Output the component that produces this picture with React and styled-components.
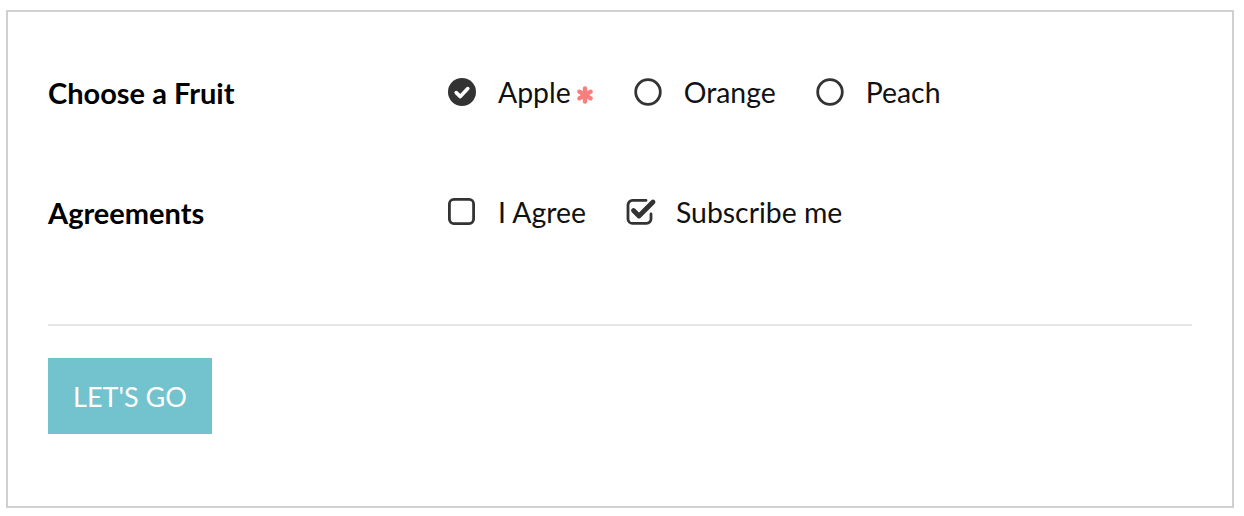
import React, { useState } from 'react';
import styled, { createGlobalStyle } from 'styled-components';

const GlobalStyle = createGlobalStyle`
    body {
        margin: 0;
        background: #fff;
        font-family: Lato, "Liberation Sans", sans-serif;
        color: #111;
    }
`;

const Card = styled.form`
    box-sizing: border-box;
    width: 1228px;
    height: 498px;
    margin: 10px 0 0 6px;
    border: 2px solid #d0d0d0;
    padding: 40px 40px 0 40px;
`;

const Row = styled.div`
    display: grid;
    grid-template-columns: 400px 1fr;
    align-items: center;
    height: 80px;
    margin-bottom: 40px;
`;

const Label = styled.div`
    font-size: 29px;
    font-weight: 700;
    color: #000;
`;

const Options = styled.div`
    display: flex;
    align-items: center;
    gap: 40px;
`;

const Option = styled.label`
    display: flex;
    align-items: center;
    gap: 22px;
    font-size: 28.4px;
    font-weight: 400;
    color: #111;
    cursor: pointer;
`;

const OptionText = styled.span`
    display: flex;
    align-items: center;
`;

const Required = styled.svg`
    width: 18px;
    height: 18px;
    margin-left: 5px;
    margin-top: 6px;
`;

const Icon = styled.svg`
    width: 28px;
    height: 28px;
    flex: none;
    overflow: visible;
`;

const Divider = styled.hr`
    border: none;
    border-top: 2px solid #e6e6e6;
    margin: 72px 0 32px 0;
`;

const Button = styled.button`
    width: 164px;
    height: 76px;
    border: none;
    background: #72c3ce;
    color: #fff;
    font-family: inherit;
    font-size: 27px;
    text-transform: uppercase;
    cursor: pointer;
`;

const RadioIcon = ({ checked }) =>
    checked ? (
        <Icon viewBox="0 0 28 28">
            <circle cx="14" cy="14" r="14" fill="#333" />
            <path
                d="M8.2 14.6 L12.3 18.6 L19.8 10.6"
                fill="none"
                stroke="#fff"
                strokeWidth="3.6"
                strokeLinecap="round"
                strokeLinejoin="round"
            />
        </Icon>
    ) : (
        <Icon viewBox="0 0 28 28">
            <circle cx="14" cy="14" r="12.3" fill="none" stroke="#333" strokeWidth="2.8" />
        </Icon>
    );

const CheckIcon = ({ checked }) =>
    checked ? (
        <Icon viewBox="0 0 28 28">
            <path
                d="M20 2.4 H6.5 A4.5 4.5 0 0 0 2 6.9 V20.9 A4.5 4.5 0 0 0 6.5 25.4 H20.5 A4.5 4.5 0 0 0 25 20.9 V16"
                fill="none"
                stroke="#333"
                strokeWidth="2.8"
                strokeLinecap="round"
            />
            <path
                d="M7.5 12.5 L13 18 L27 4"
                fill="none"
                stroke="#333"
                strokeWidth="4.8"
                strokeLinecap="round"
                strokeLinejoin="round"
            />
        </Icon>
    ) : (
        <Icon viewBox="0 0 28 28">
            <rect x="1.4" y="1.4" width="24.2" height="24.2" rx="4.5" fill="none" stroke="#333" strokeWidth="2.8" />
        </Icon>
    );

const Asterisk = () => (
    <Required viewBox="0 0 18 18">
        <g stroke="#f77f7f" strokeWidth="4.4" strokeLinecap="round">
            <line x1="9" y1="2.5" x2="9" y2="15.5" />
            <line x1="3.4" y1="5.7" x2="14.6" y2="12.3" />
            <line x1="3.4" y1="12.3" x2="14.6" y2="5.7" />
        </g>
    </Required>
);

const fruits = ['Apple', 'Orange', 'Peach'];

const App = () => {
    const [fruit, setFruit] = useState('Apple');
    const [agree, setAgree] = useState(false);
    const [subscribe, setSubscribe] = useState(true);

    return (
        <>
            <GlobalStyle />
            <Card onSubmit={(e) => e.preventDefault()}>
                <Row>
                    <Label>Choose a Fruit</Label>
                    <Options>
                        {fruits.map((f) => (
                            <Option key={f} onClick={() => setFruit(f)}>
                                <RadioIcon checked={fruit === f} />
                                <OptionText>
                                    {f}
                                    {f === 'Apple' && <Asterisk />}
                                </OptionText>
                            </Option>
                        ))}
                    </Options>
                </Row>
                <Row>
                    <Label>Agreements</Label>
                    <Options>
                        <Option onClick={() => setAgree(!agree)}>
                            <CheckIcon checked={agree} />
                            <OptionText>I Agree</OptionText>
                        </Option>
                        <Option onClick={() => setSubscribe(!subscribe)}>
                            <CheckIcon checked={subscribe} />
                            <OptionText>Subscribe me</OptionText>
                        </Option>
                    </Options>
                </Row>
                <Divider />
                <Button type="submit">Let's go</Button>
            </Card>
        </>
    );
};

export default App;
